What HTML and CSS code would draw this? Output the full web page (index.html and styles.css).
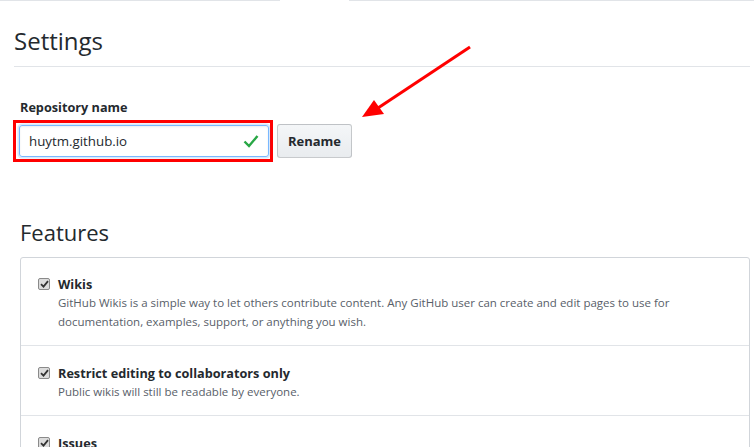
FILE: index.html
```html
<!DOCTYPE html>
<html>
<head>
<meta charset="utf-8">
<link rel="stylesheet" href="styles.css">
</head>
<body>
<div class="topbar"><div class="seg seg-left"></div><div class="seg seg-right"></div></div>
<div class="page">
  <h2 class="settings-title">Settings</h2>
  <div class="repo">
    <label class="label">Repository name</label>
    <div class="repo-row">
      <div class="highlight">
        <div class="input">
          <span class="input-text">huytm.github.io</span>
          <svg class="ok" width="16" height="14" viewBox="0 0 16 14"><path d="M1.5 7.5 L6 12 L14.5 2" fill="none" stroke="#28a745" stroke-width="2.4"/></svg>
        </div>
      </div>
      <button class="btn">Rename</button>
    </div>
  </div>
  <h2 class="features-title">Features</h2>
  <div class="box">
    <div class="row">
      <span class="cb"><svg width="9" height="8" viewBox="0 0 9 8"><path d="M1 4.2 L3.5 6.6 L8 1.2" fill="none" stroke="#333" stroke-width="1.8"/></svg></span>
      <div class="row-body">
        <div class="row-title">Wikis</div>
        <p class="row-desc">GitHub Wikis is a simple way to let others contribute content. Any GitHub user can create and edit pages to use for documentation, examples, support, or anything you wish.</p>
      </div>
    </div>
    <div class="row">
      <span class="cb"><svg width="9" height="8" viewBox="0 0 9 8"><path d="M1 4.2 L3.5 6.6 L8 1.2" fill="none" stroke="#333" stroke-width="1.8"/></svg></span>
      <div class="row-body">
        <div class="row-title">Restrict editing to collaborators only</div>
        <p class="row-desc">Public wikis will still be readable by everyone.</p>
      </div>
    </div>
    <div class="row">
      <span class="cb"><svg width="9" height="8" viewBox="0 0 9 8"><path d="M1 4.2 L3.5 6.6 L8 1.2" fill="none" stroke="#333" stroke-width="1.8"/></svg></span>
      <div class="row-body">
        <div class="row-title">Issues</div>
      </div>
    </div>
  </div>
</div>
<svg class="arrow" width="130" height="90" viewBox="0 0 130 90">
  <line x1="110" y1="7" x2="18" y2="68" stroke="#f00" stroke-width="3"/>
  <polygon points="2,77 14,60 24,74" fill="#f00"/>
</svg>
</body>
</html>
```
FILE: styles.css
```css
html, body {
  margin: 0;
  padding: 0;
  background: #fff;
}
body {
  font-family: "Open Sans", "Liberation Sans", sans-serif;
  color: #24292e;
  width: 754px;
  height: 447px;
  overflow: hidden;
  position: relative;
}
.topbar {
  display: flex;
  height: 1px;
}
.seg {
  background: #e1e4e8;
  height: 1px;
}
.seg-left { width: 280px; }
.seg-right { flex: 1; margin-left: 69px; }
.page {
  padding: 0 4px 0 20px;
}
.settings-title {
  margin: 0 0 0 -6px;
  padding: 25px 0 10px;
  font-size: 24px;
  font-weight: 400;
  line-height: 30px;
  border-bottom: 1px solid #e1e4e8;
}
.repo {
  margin-top: 31px;
}
.label {
  display: block;
  font-size: 12.7px;
  font-weight: 700;
  line-height: 18px;
}
.repo-row {
  display: flex;
  align-items: center;
  margin-top: 4px;
  margin-left: -7px;
}
.highlight {
  border: 3px solid #f00;
  padding: 2px 1px 2px 3px;
}
.input {
  height: 32px;
  border: 1px solid #79b8ff;
  border-radius: 3px;
  display: flex;
  align-items: center;
  justify-content: space-between;
  padding: 0 9px 0 9px;
  box-sizing: border-box;
  width: 250px;
  box-shadow: inset 0 1px 2px rgba(27,31,35,0.075), 0 0 0 0.1em rgba(3,102,214,0.15);
}
.input-text {
  font-size: 13.3px;
  color: #24292e;
}
.ok { display: block; }
.btn {
  margin-left: 4px;
  width: 75px;
  height: 34px;
  font-family: inherit;
  font-size: 13px;
  font-weight: 700;
  color: #24292e;
  background: linear-gradient(#f4f6f8, #e9ecef);
  border: 1px solid rgba(27,31,35,0.2);
  border-radius: 3px;
  padding: 0;
}
.features-title {
  margin: 55px 0 0;
  font-size: 22px;
  font-weight: 400;
  line-height: 30px;
}
.box {
  margin-top: 10px;
  border: 1px solid #d1d5da;
  border-radius: 3px;
  height: 300px;
}
.row {
  display: flex;
  padding: 18px 17px 14px 17px;
  border-top: 1px solid #e1e4e8;
}
.row:first-child { border-top: 0; padding-top: 17px; }
.cb {
  flex: none;
  width: 10px;
  height: 10px;
  margin-top: 3px;
  border: 1px solid #8a8a8a;
  border-radius: 2px;
  background: #dcdcdc;
  display: flex;
  align-items: center;
  justify-content: center;
}
.cb svg { display: block; }
.row-body {
  margin-left: 8px;
}
.row-title {
  font-size: 12.7px;
  font-weight: 700;
  line-height: 18px;
}
.row-desc {
  margin: 0;
  font-size: 11.5px;
  line-height: 19px;
  color: #586069;
}
.arrow {
  position: absolute;
  left: 360px;
  top: 40px;
}
```
